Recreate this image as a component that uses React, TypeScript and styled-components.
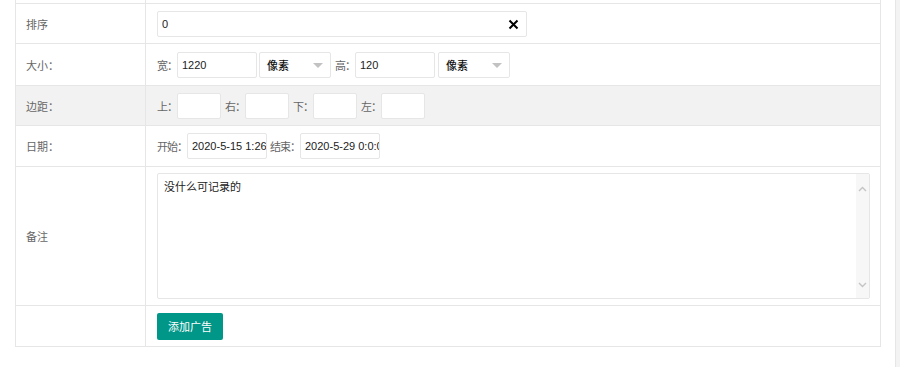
import React from 'react';
import styled, { createGlobalStyle } from 'styled-components';

const GlobalStyle = createGlobalStyle`
  html, body {
    margin: 0;
    padding: 0;
    background: #fff;
  }
  body {
    font-family: "Liberation Sans", "Noto Sans CJK SC", sans-serif;
    font-size: 11px;
    color: #333;
  }
`;

const Page = styled.div`
  display: flex;
  height: 367px;
  overflow: hidden;
`;

const Main = styled.div`
  flex: 1;
  padding: 0 14px 0 15px;
`;

const Edge = styled.div`
  width: 4px;
  border-left: 1px solid #e6e6e6;
  background: #f3f3f3;
`;

const Table = styled.div`
  border-left: 1px solid #e6e6e6;
  border-right: 1px solid #e6e6e6;
`;

const Row = styled.div<{ $h: number; $shade?: boolean }>`
  display: flex;
  height: ${({ $h }) => $h}px;
  box-sizing: border-box;
  border-bottom: 1px solid #e6e6e6;
  background: ${({ $shade }) => ($shade ? '#f2f2f2' : '#fff')};
`;

const Label = styled.div`
  width: 130px;
  box-sizing: border-box;
  border-right: 1px solid #e6e6e6;
  padding-left: 10px;
  display: flex;
  align-items: center;
  color: #666;
`;

const Cell = styled.div`
  flex: 1;
  display: flex;
  align-items: center;
  padding-left: 11px;
`;

const Tag = styled.span<{ $lead?: number }>`
  color: #666;
  letter-spacing: -1px;
  margin-left: ${({ $lead }) => $lead ?? 0}px;
  white-space: nowrap;
`;

const Input = styled.div<{ $w: number }>`
  width: ${({ $w }) => $w}px;
  height: 26px;
  box-sizing: border-box;
  border: 1px solid #e6e6e6;
  border-radius: 2px;
  background: #fff;
  padding: 0 4px;
  display: flex;
  align-items: center;
  color: #222;
  white-space: nowrap;
  overflow: hidden;
`;

const Field = styled.div`
  position: relative;
`;

const Clear = styled.span`
  position: absolute;
  right: 8px;
  top: 8px;
  display: flex;
`;

const Select = styled.div<{ $lead?: number }>`
  width: 72px;
  height: 26px;
  box-sizing: border-box;
  margin-left: ${({ $lead }) => $lead ?? 0}px;
  border: 1px solid #e6e6e6;
  border-radius: 2px;
  background: #fff;
  padding: 0 7px;
  display: flex;
  align-items: center;
  justify-content: space-between;
  color: #111;
  font-weight: 500;
`;

const Caret = styled.i`
  width: 0;
  height: 0;
  border-left: 5px solid transparent;
  border-right: 5px solid transparent;
  border-top: 5px solid #c2c2c2;
  margin-top: 1px;
`;

const Memo = styled.div`
  width: 713px;
  height: 126px;
  box-sizing: border-box;
  border: 1px solid #e6e6e6;
  border-radius: 2px;
  display: flex;
`;

const MemoText = styled.div`
  flex: 1;
  padding: 6px 6px;
  line-height: 14px;
  color: #222;
`;

const Track = styled.div`
  width: 13px;
  background: #f7f7f7;
  display: flex;
  flex-direction: column;
  justify-content: space-between;
  align-items: center;
  padding: 12px 0 10px;
`;

const Button = styled.button`
  width: 66px;
  height: 27px;
  border: none;
  border-radius: 2px;
  background: #009688;
  color: #fff;
  font-family: inherit;
  font-size: 11px;
  padding: 0;
`;

const Chevron = ({ up }: { up?: boolean }) => (
  <svg width="9" height="6" viewBox="0 0 9 6">
    <path
      d={up ? 'M1 5 L4.5 1.5 L8 5' : 'M1 1 L4.5 4.5 L8 1'}
      fill="none"
      stroke="#c4c4c4"
      strokeWidth="1.4"
    />
  </svg>
);

const App: React.FC = () => {
  return (
    <Page>
      <GlobalStyle />
      <Main>
        <Table>
          <Row $h={4}>
            <Label />
            <Cell />
          </Row>

          <Row $h={40}>
            <Label>排序</Label>
            <Cell>
              <Field>
                <Input $w={370}>0</Input>
                <Clear>
                  <svg width="11" height="11" viewBox="0 0 11 11">
                    <path d="M1.5 1.5 L9.5 9.5 M9.5 1.5 L1.5 9.5" stroke="#000" strokeWidth="2" />
                  </svg>
                </Clear>
              </Field>
            </Cell>
          </Row>

          <Row $h={42}>
            <Label>大小：</Label>
            <Cell>
              <Tag>宽：</Tag>
              <Input $w={80}>1220</Input>
              <Select $lead={2}>
                像素
                <Caret />
              </Select>
              <Tag $lead={4}>高：</Tag>
              <Input $w={80}>120</Input>
              <Select $lead={3}>
                像素
                <Caret />
              </Select>
            </Cell>
          </Row>

          <Row $h={40} $shade>
            <Label>边距：</Label>
            <Cell>
              <Tag>上：</Tag>
              <Input $w={44} />
              <Tag $lead={4}>右：</Tag>
              <Input $w={44} />
              <Tag $lead={4}>下：</Tag>
              <Input $w={44} />
              <Tag $lead={4}>左：</Tag>
              <Input $w={44} />
            </Cell>
          </Row>

          <Row $h={41}>
            <Label>日期：</Label>
            <Cell>
              <Tag>开始：</Tag>
              <Input $w={80}>2020-5-15 1:26:3</Input>
              <Tag $lead={3}>结束：</Tag>
              <Input $w={80}>2020-5-29 0:0:0</Input>
            </Cell>
          </Row>

          <Row $h={139}>
            <Label>备注</Label>
            <Cell>
              <Memo>
                <MemoText>没什么可记录的</MemoText>
                <Track>
                  <Chevron up />
                  <Chevron />
                </Track>
              </Memo>
            </Cell>
          </Row>

          <Row $h={41}>
            <Label />
            <Cell>
              <Button>添加广告</Button>
            </Cell>
          </Row>
        </Table>
      </Main>
      <Edge />
    </Page>
  );
};

export default App;
